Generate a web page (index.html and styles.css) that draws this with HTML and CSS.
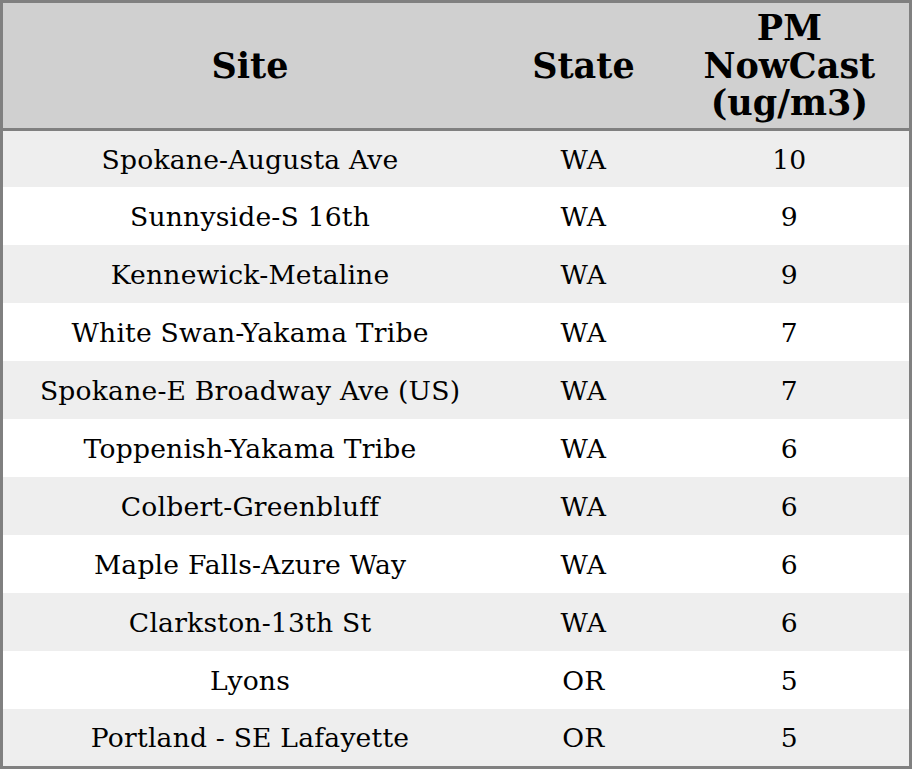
FILE: index.html
```html
<!DOCTYPE html>
<html>
<head>
<meta charset="utf-8">
<link rel="stylesheet" href="styles.css">
</head>
<body>
<table class="aq">
  <colgroup>
    <col class="c-site">
    <col class="c-state">
    <col class="c-pm">
  </colgroup>
  <thead>
    <tr><th>Site</th><th>State</th><th>PM<br>NowCast<br>(ug/m3)</th></tr>
  </thead>
  <tbody>
    <tr><td>Spokane-Augusta Ave</td><td>WA</td><td>10</td></tr>
    <tr><td>Sunnyside-S 16th</td><td>WA</td><td>9</td></tr>
    <tr><td>Kennewick-Metaline</td><td>WA</td><td>9</td></tr>
    <tr><td>White Swan-Yakama Tribe</td><td>WA</td><td>7</td></tr>
    <tr><td>Spokane-E Broadway Ave (US)</td><td>WA</td><td>7</td></tr>
    <tr><td>Toppenish-Yakama Tribe</td><td>WA</td><td>6</td></tr>
    <tr><td>Colbert-Greenbluff</td><td>WA</td><td>6</td></tr>
    <tr><td>Maple Falls-Azure Way</td><td>WA</td><td>6</td></tr>
    <tr><td>Clarkston-13th St</td><td>WA</td><td>6</td></tr>
    <tr><td>Lyons</td><td>OR</td><td>5</td></tr>
    <tr><td>Portland - SE Lafayette</td><td>OR</td><td>5</td></tr>
  </tbody>
</table>
</body>
</html>
```
FILE: styles.css
```css
html, body {
  margin: 0;
  padding: 0;
  background: #ffffff;
}
.aq {
  width: 912px;
  border-collapse: collapse;
  border: 3px solid #808080;
  table-layout: fixed;
  font-family: "DejaVu Serif", serif;
  color: #000;
}
.c-site { width: 494px; }
.c-state { width: 172px; }
.c-pm { width: 240px; }
.aq th {
  background: #d0d0d0;
  font-size: 35px;
  font-weight: bold;
  line-height: 37.5px;
  height: 125px;
  padding: 0;
  text-align: center;
  vertical-align: middle;
  border-bottom: 3px solid #808080;
}
.aq td {
  font-size: 26.6px;
  letter-spacing: 0.2px;
  height: 58px;
  padding: 0;
  text-align: center;
  vertical-align: middle;
}
.aq tbody tr:nth-child(odd) td { background: #eeeeee; }
.aq tbody tr:first-child td { height: 56px; }
.aq tbody tr:last-child td { height: 57px; }
```
